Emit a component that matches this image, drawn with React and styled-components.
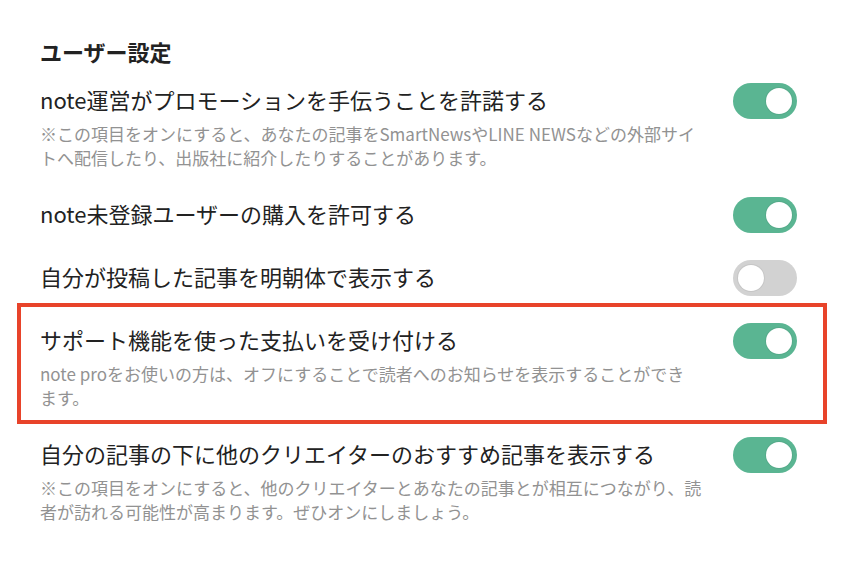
import React from "react";
import styled, { createGlobalStyle } from "styled-components";

const GlobalStyle = createGlobalStyle`
  html, body {
    margin: 0;
    padding: 0;
    background: #ffffff;
  }
  body {
    font-family: "Noto Sans CJK JP", "Noto Sans", sans-serif;
    color: #222222;
    -webkit-font-smoothing: antialiased;
  }
`;

const Page = styled.main`
  width: 854px;
  box-sizing: border-box;
  padding: 36px 57px 40px 40px;
`;

const Heading = styled.h2`
  margin: 0 0 17px;
  font-size: 22px;
  line-height: 30px;
  font-weight: 700;
  color: #222222;
`;

const List = styled.div`
  display: flex;
  flex-direction: column;
  gap: 27px;
`;

const Row = styled.div`
  position: relative;
  display: flex;
  align-items: flex-start;
  justify-content: space-between;
  gap: 17px;

  ${(p) =>
    p.$highlight &&
    `
    &::after {
      content: "";
      position: absolute;
      top: -20px;
      bottom: -14px;
      left: -23px;
      right: -30px;
      border: 4px solid #e8432a;
      pointer-events: none;
    }
  `}
`;

const TextCol = styled.div`
  flex: 1;
  min-width: 0;
`;

const Title = styled.div`
  font-size: 22px;
  line-height: 32px;
  padding-bottom: 4px;
  color: #222222;
  white-space: nowrap;
`;

const Desc = styled.p`
  margin: 3px 0 0;
  font-size: 17px;
  line-height: 24px;
  color: #929292;
  white-space: pre-line;
`;

const Switch = styled.button`
  flex: none;
  position: relative;
  width: 64px;
  height: 36px;
  padding: 0;
  border: none;
  border-radius: 18px;
  background: ${(p) => (p.$on ? "#5ab592" : "#d2d2d2")};
  cursor: pointer;
`;

const Knob = styled.span`
  position: absolute;
  top: 5px;
  left: ${(p) => (p.$on ? "33px" : "5px")};
  width: 26px;
  height: 26px;
  border-radius: 50%;
  background: #ffffff;
  box-shadow: 0 0 0 1px rgba(0, 0, 0, 0.06);
`;

const settings = [
  {
    title: "note運営がプロモーションを手伝うことを許諾する",
    desc: "※この項目をオンにすると、あなたの記事をSmartNewsやLINE NEWSなどの外部サイ\nトへ配信したり、出版社に紹介したりすることがあります。",
    on: true,
  },
  { title: "note未登録ユーザーの購入を許可する", on: true },
  { title: "自分が投稿した記事を明朝体で表示する", on: false },
  {
    title: "サポート機能を使った支払いを受け付ける",
    desc: "note proをお使いの方は、オフにすることで読者へのお知らせを表示することができ\nます。",
    on: true,
    highlight: true,
  },
  {
    title: "自分の記事の下に他のクリエイターのおすすめ記事を表示する",
    desc: "※この項目をオンにすると、他のクリエイターとあなたの記事とが相互につながり、読\n者が訪れる可能性が高まります。ぜひオンにしましょう。",
    on: true,
  },
];

function Toggle({ on }) {
  return (
    <Switch type="button" role="switch" aria-checked={on} $on={on}>
      <Knob $on={on} />
    </Switch>
  );
}

export default function App() {
  return (
    <>
      <GlobalStyle />
      <Page lang="ja">
        <Heading>ユーザー設定</Heading>
        <List>
          {settings.map((s) => (
            <Row key={s.title} $highlight={s.highlight}>
              <TextCol>
                <Title>{s.title}</Title>
                {s.desc && <Desc>{s.desc}</Desc>}
              </TextCol>
              <Toggle on={s.on} />
            </Row>
          ))}
        </List>
      </Page>
    </>
  );
}
